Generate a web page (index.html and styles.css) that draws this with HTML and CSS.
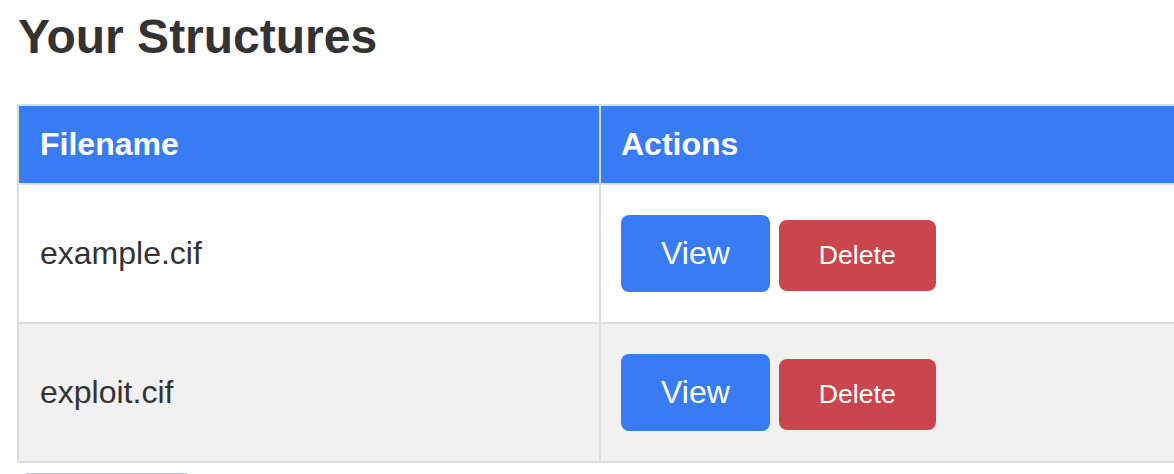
FILE: index.html
```html
<!DOCTYPE html>
<html>
<head>
<meta charset="utf-8">
<title>Your Structures</title>
<link rel="stylesheet" href="styles.css">
</head>
<body>
<div class="page">
  <h2 class="title">Your Structures</h2>
  <div class="table-wrap">
    <table class="files">
      <thead>
        <tr>
          <th class="col-file">Filename</th>
          <th>Actions</th>
        </tr>
      </thead>
      <tbody>
        <tr>
          <td>example.cif</td>
          <td><a class="btn-view" href="#">View</a> <button class="btn-delete">Delete</button></td>
        </tr>
        <tr class="alt">
          <td>exploit.cif</td>
          <td><a class="btn-view" href="#">View</a> <button class="btn-delete">Delete</button></td>
        </tr>
      </tbody>
    </table>
  </div>
  <div class="btn-upload" aria-label="Upload"></div>
</div>
</body>
</html>
```

FILE: styles.css
```css
html, body {
  margin: 0;
  padding: 0;
  background: #ffffff;
  overflow: hidden;
}

.page {
  padding: 9px 0 0 17px;
  font-family: "Liberation Sans", Arial, sans-serif;
  color: #333333;
  font-size: 32px;
}

.title {
  margin: 0 0 40px 1px;
  font-size: 48px;
  font-weight: bold;
  color: #333333;
}

.table-wrap {
  overflow: hidden;
}

.files {
  width: 1400px;
  table-layout: fixed;
  border-collapse: separate;
  border-spacing: 0;
  border-top: 2px solid #dddddd;
  border-left: 2px solid #dddddd;
}

.files th,
.files td {
  border-right: 2px solid #dddddd;
  border-bottom: 2px solid #dddddd;
  text-align: left;
}

.files th {
  background: #377bf5;
  color: #ffffff;
  font-weight: bold;
  padding: 20px 20px 20px 21px;
}

.files th.col-file {
  box-sizing: border-box;
  width: 582px;
}

.files td {
  padding: 30px 20px 30px 21px;
  vertical-align: middle;
  background: #ffffff;
}

.files td + td {
  padding-left: 20px;
}

.files th + th {
  padding-left: 20px;
}

.files tr.alt td {
  background: #f1f1f1;
}

.btn-view {
  display: inline-block;
  padding: 20px 40px;
  background: #377bf5;
  color: #ffffff;
  text-decoration: none;
  border-radius: 8px;
  font-size: 32px;
}

.btn-delete {
  padding: 20px 40px;
  background: #cb454d;
  color: #ffffff;
  border: none;
  border-radius: 8px;
  font-family: "Liberation Sans", Arial, sans-serif;
  font-size: 26.667px;
}

.btn-upload {
  margin: 10px 0 0 4px;
  width: 170px;
  height: 60px;
  background: #3a7be0;
  border: 1px solid #b9c6dc;
  border-radius: 8px;
}
```
